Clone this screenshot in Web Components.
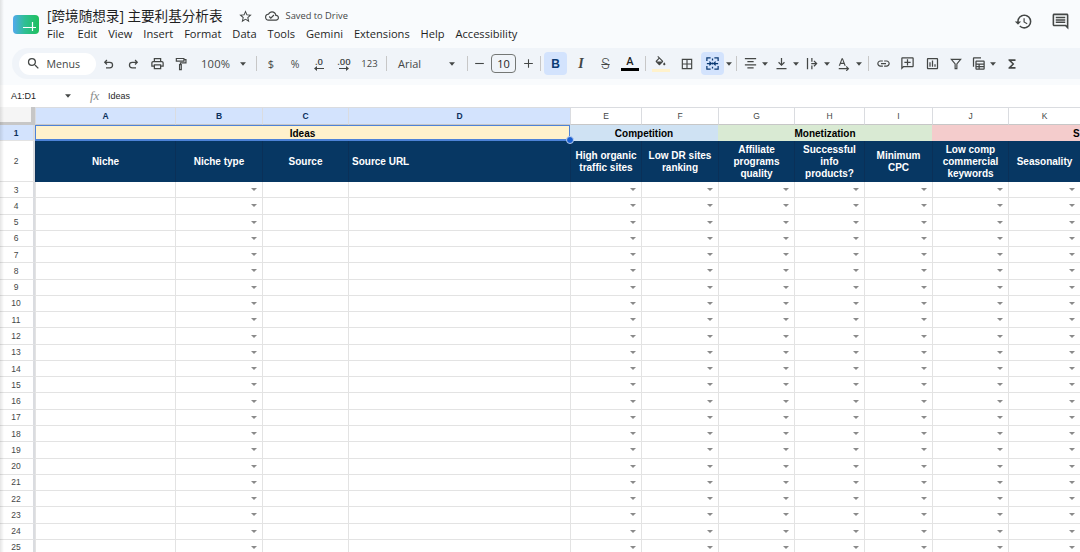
<!doctype html>
<html>
<head>
<meta charset="utf-8">
<title>Sheet</title>
<style>
  html, body { margin: 0; height: 552px; overflow: hidden; background: #f9fbfd; }
  sheet-app { font-family: Roboto, "Liberation Sans", sans-serif; }
</style>
</head>
<body>
<sheet-app></sheet-app>

<script>
  (function (document, window) {

    const ICONS = {
      search: '<path d="M15.5 14h-.79l-.28-.27A6.471 6.471 0 0 0 16 9.5 6.5 6.5 0 1 0 9.5 16c1.61 0 3.09-.59 4.23-1.57l.27.28v.79l5 4.99L20.49 19l-4.99-5zm-6 0C7.01 14 5 11.99 5 9.5S7.01 5 9.5 5 14 7.01 14 9.5 11.99 14 9.5 14z"/>',
      undo: '<path d="M6 10h8a4.5 4.5 0 0 1 0 9H8M9.5 6.5L6 10l3.5 3.5" fill="none" stroke="currentColor" stroke-width="2"/>',
      redo: '<path d="M18 10h-8a4.5 4.5 0 0 0 0 9h6M14.5 6.5L18 10l-3.5 3.5" fill="none" stroke="currentColor" stroke-width="2"/>',
      print: '<path d="M19 8h-1V3H6v5H5c-1.66 0-3 1.34-3 3v6h4v4h12v-4h4v-6c0-1.66-1.34-3-3-3zM8 5h8v3H8V5zm8 12v2H8v-4h8v2zm2-2v-2H6v2H4v-4c0-.55.45-1 1-1h14c.55 0 1 .45 1 1v4h-2z"/>',
      paint: '<path d="M4 2.5h13V7H4zM17 4.5h3.5V10H11v3M9.5 13h3v8.5h-3z" fill="none" stroke="currentColor" stroke-width="2"/>',
      minus: '<path d="M4 11h16v2H4z"/>',
      plus: '<path d="M11 4h2v7h7v2h-7v7h-2v-7H4v-2h7z"/>',
      fill: '<path d="M16.56 8.94L7.62 0 6.21 1.41l2.38 2.38-5.15 5.15c-.59.59-.59 1.54 0 2.12l5.5 5.5c.29.29.68.44 1.06.44s.77-.15 1.06-.44l5.5-5.5c.59-.58.59-1.53 0-2.12zM5.21 10L10 5.21 14.79 10H5.21zM19 11.5s-2 2.17-2 3.5c0 1.1.9 2 2 2s2-.9 2-2c0-1.33-2-3.5-2-3.5z"/>',
      borders: '<path d="M3 3v18h18V3H3zm8 16H5v-6h6v6zm0-8H5V5h6v6zm8 8h-6v-6h6v6zm0-8h-6V5h6v6z"/>',
      merge: '<path d="M3 8V3h6M21 8V3h-6M3 16v5h6M21 16v5h-6M3 12h6M21 12h-6M7 9l3 3-3 3M17 9l-3 3 3 3M12 4v3M12 10.5v3M12 17v3" fill="none" stroke="currentColor" stroke-width="2"/>',
      align: '<path d="M3 3h18v2H3zM7 8h10v2H7zM3 13h18v2H3zM7 18h10v2H7z"/>',
      valign: '<path d="M4 19h16v2H4zM13 3v9.2l3-3 1.4 1.4L12 16l-5.4-5.4L8 9.2l3 3V3z"/>',
      wrap: '<path d="M3 3h2v18H3zM10 3h2v6h-2zM10 15h2v6h-2zM10 11h6.2l-2.6-2.6L15 7l5 5-5 5-1.4-1.4 2.6-2.6H10z"/>',
      rotate: '<path d="M3 15h2.2l1-3h5.6l1 3H15L10 2H8L3 15zm4-5l2-5.6L11 10H7zM3 19h14.2l-2-2 1.4-1.4L21 20l-4.4 4.4-1.4-1.4 2-2H3z"/>',
      link: '<path d="M3.9 12c0-1.71 1.39-3.1 3.1-3.1h4V7H7c-2.76 0-5 2.24-5 5s2.24 5 5 5h4v-1.9H7c-1.71 0-3.1-1.39-3.1-3.1zM8 13h8v-2H8v2zm9-6h-4v1.9h4c1.71 0 3.1 1.39 3.1 3.1s-1.39 3.1-3.1 3.1h-4V17h4c2.76 0 5-2.24 5-5s-2.24-5-5-5z"/>',
      comment: '<path d="M20 2H4c-1.1 0-2 .9-2 2v18l4-4h14c1.1 0 2-.9 2-2V4c0-1.1-.9-2-2-2zm0 14H5.17L4 17.17V4h16v12z"/><path d="M13 5h-2v4H7v2h4v4h2v-4h4V9h-4z"/>',
      chart: '<path d="M19 3H5c-1.1 0-2 .9-2 2v14c0 1.1.9 2 2 2h14c1.1 0 2-.9 2-2V5c0-1.1-.9-2-2-2zm0 16H5V5h14v14zM7 10h2v7H7zm4-3h2v10h-2zm4 6h2v4h-2z"/>',
      filter: '<path d="M4 4h16l-6.5 8v8h-3v-8L4 4z" fill="none" stroke="currentColor" stroke-width="2"/>',
      table: '<path d="M3 17V4c0-1.1.9-2 2-2h11v2H5v13H3z"/><path d="M9 7h11c1.1 0 2 .9 2 2v11c0 1.1-.9 2-2 2H9c-1.1 0-2-.9-2-2V9c0-1.1.9-2 2-2zm0 2v3h11V9H9zm0 5v2h3v-2H9zm5 0v2h6v-2h-6zm-5 4v2h3v-2H9zm5 0v2h6v-2h-6z"/>',
      sigma: '<path d="M18 4H6v2l6.5 6L6 18v2h12v-3h-7l5-5-5-5h7z"/>',
      caret: '<path d="M5 8l7 8 7-8z"/>',
      star: '<path d="M22 9.24l-7.19-.62L12 2 9.19 8.63 2 9.24l5.46 4.73L5.82 21 12 17.27 18.18 21l-1.63-7.03L22 9.24zM12 15.4l-3.76 2.27 1-4.28-3.32-2.88 4.38-.38L12 6.1l1.71 4.04 4.38.38-3.32 2.88 1 4.28L12 15.4z"/>',
      cloud: '<path d="M19.35 10.04A7.49 7.49 0 0 0 12 4C9.11 4 6.6 5.64 5.35 8.04A5.994 5.994 0 0 0 0 14c0 3.31 2.69 6 6 6h13c2.76 0 5-2.24 5-5 0-2.64-2.05-4.78-4.65-4.96zM19 18H6c-2.21 0-4-1.79-4-4 0-2.05 1.53-3.76 3.56-3.97l1.07-.11.5-.95A5.469 5.469 0 0 1 12 6c2.62 0 4.88 1.86 5.39 4.43l.3 1.5 1.53.11A2.98 2.98 0 0 1 22 15c0 1.65-1.35 3-3 3zm-9-3.82l-2.09-2.09L6.5 13.5 10 17l6.01-6.01-1.41-1.41z"/>',
      history: '<path d="M13 3a9 9 0 0 0-9 9H1l3.89 3.89.07.14L9 12H6c0-3.87 3.13-7 7-7s7 3.13 7 7-3.13 7-7 7c-1.93 0-3.68-.79-4.94-2.06l-1.42 1.42A8.954 8.954 0 0 0 13 21a9 9 0 0 0 0-18zm-1 5v5l4.28 2.54.72-1.21-3.5-2.08V8H12z"/>',
      chat: '<path d="M22 4c0-1.1-.9-2-2-2H4c-1.1 0-2 .9-2 2v12c0 1.1.9 2 2 2h14l4 4V4zm-2 13.17L18.83 16H4V4h16v13.17zM6 12h12v2H6zm0-3h12v2H6zm0-3h12v2H6z"/>'
    };

    function icon(name, size) {
      return `<svg width="${size}" height="${size}" viewBox="0 0 24 24" fill="currentColor" aria-hidden="true">${ICONS[name]}</svg>`;
    }

    // one slot of the toolbar: w = width, ml = gap before it, icon or slotted text
    class TbBtn extends HTMLElement {
      connectedCallback() {
        if (this.shadowRoot) return;
        const shadowRoot = this.attachShadow({ mode: 'open' });
        const w = this.getAttribute('w') || 24;
        const ml = this.getAttribute('ml') || 0;
        const name = this.getAttribute('icon');
        const size = this.getAttribute('size') || 15;
        shadowRoot.innerHTML = `<style>
          :host { display: flex; flex: none; align-items: center; justify-content: center;
            width: ${w}px; margin-left: ${ml}px; height: 23px; color: #444746; font-size: 11px; }
          :host([active]) { background: #d3e3fd; border-radius: 4px; color: #0b3a73; }
          svg { flex: none; }
        </style>${name ? icon(name, size) : ''}<slot></slot>`;
      }
    }
    window.customElements.define('tb-btn', TbBtn);

    // dropdown in the toolbar: label at the left, caret at the right
    class TbSelect extends HTMLElement {
      connectedCallback() {
        if (this.shadowRoot) return;
        const shadowRoot = this.attachShadow({ mode: 'open' });
        const w = this.getAttribute('w');
        const pad = this.getAttribute('pad');
        const right = this.getAttribute('right');
        shadowRoot.innerHTML = `<style>
          :host { display: flex; flex: none; align-items: center; justify-content: space-between; box-sizing: border-box;
            width: ${w}px; height: 23px; padding: 0 ${right}px 0 ${pad}px; color: #444746; font-size: 11px; }
          svg { flex: none; }
        </style><slot></slot>${icon('caret', 10)}`;
      }
    }
    window.customElements.define('tb-select', TbSelect);

    class TbSep extends HTMLElement {
      connectedCallback() {
        if (this.shadowRoot) return;
        const shadowRoot = this.attachShadow({ mode: 'open' });
        shadowRoot.innerHTML = `<style>
          :host { display: flex; flex: none; justify-content: center; align-items: center; height: 23px;
            width: ${this.getAttribute('w') || 8}px; }
          i { display: block; width: 1px; height: 15px; background: #c7c7c7; }
        </style><i></i>`;
      }
    }
    window.customElements.define('tb-sep', TbSep);

    class TitleBar extends HTMLElement {
      connectedCallback() {
        if (this.shadowRoot) return;
        const shadowRoot = this.attachShadow({ mode: 'open' });
        const menus = ['File', 'Edit', 'View', 'Insert', 'Format', 'Data', 'Tools', 'Gemini', 'Extensions', 'Help', 'Accessibility'];
        shadowRoot.innerHTML = `<style>
          :host { display: flex; height: 48px; box-sizing: border-box; padding-left: 13px; align-items: flex-start; color: #1f1f1f; }
          .logo { flex: none; margin-top: 15px; }
          .names { margin-left: 8px; margin-top: 7px; flex: 1; }
          .top { display: flex; align-items: center; height: 18px; }
          h1 { margin: 0; font: 400 13.6px/18px "Open Sans", "Noto Sans CJK SC", sans-serif; white-space: nowrap; color: #1f1f1f; }
          .star { display: flex; margin-left: 15px; color: #444746; }
          .cloud { display: flex; margin-left: 12px; color: #444746; }
          .saved { margin-left: 7px; font: 400 9.3px/18px "Open Sans", sans-serif; color: #444746; }
          nav { display: flex; margin-top: 1px; height: 16px; align-items: center; font: 400 11.1px/16px "Open Sans", sans-serif; color: #1f1f1f; }
          nav span { margin-right: 10.9px; }
          nav span:first-child { margin-right: 13px; }
          .right { flex: none; display: flex; margin-top: 12px; color: #444746; gap: 18px; margin-right: 10px; }
        </style>
        <svg class="logo" width="26" height="19" viewBox="0 0 26 19">
          <defs><linearGradient id="g" x1="0" x2="1" y1="0" y2="0">
            <stop offset="0" stop-color="#52a9ee"/><stop offset=".45" stop-color="#2fbf94"/><stop offset="1" stop-color="#1fbf5c"/>
          </linearGradient></defs>
          <rect width="26" height="19" rx="4" fill="url(#g)"/>
          <path d="M10 12.5h13M19.5 7v9" stroke="#fff" stroke-width="1.2" fill="none"/>
        </svg>
        <div class="names">
          <div class="top">
            <h1>[跨境随想录] 主要利基分析表</h1>
            <span class="star">${icon('star', 15)}</span>
            <span class="cloud">${icon('cloud', 14)}</span>
            <span class="saved">Saved to Drive</span>
          </div>
          <nav>${menus.map((m) => `<span>${m}</span>`).join('')}</nav>
        </div>
        <div class="right">${icon('history', 19)}${icon('chat', 19)}</div>`;
      }
    }
    window.customElements.define('title-bar', TitleBar);

    class ToolBar extends HTMLElement {
      connectedCallback() {
        if (this.shadowRoot) return;
        const shadowRoot = this.attachShadow({ mode: 'open' });
        shadowRoot.innerHTML = `<style>
          :host { display: flex; align-items: center; height: 31px; margin-left: 12px; box-sizing: border-box; padding-left: 7px;
            background: #f0f4f9; border-radius: 16px 0 0 16px; color: #444746; font-family: "Open Sans", sans-serif; }
          .search { display: flex; flex: none; align-items: center; width: 77px; height: 22px; background: #fff; border-radius: 11px;
            box-sizing: border-box; padding-left: 7px; font-size: 10.6px; color: #444746; }
          .search span { margin-left: 5.5px; }
          .dec { display: flex; flex-direction: column; align-items: center; line-height: 9px; font-size: 9.5px; font-weight: 600; }
          .dec svg { display: block; margin-top: 0; }
          .box { display: block; width: 25.5px; height: 19px; box-sizing: border-box; border: 1px solid #747775; border-radius: 4px;
            font-size: 11px; line-height: 17px; text-align: center; color: #1f1f1f; }
          .b { font: 700 12px "Liberation Sans", sans-serif; }
          .i { font: italic 700 14px "Liberation Serif", serif; }
          .s { font: 300 14px Roboto, sans-serif; text-decoration: line-through; }
          .a { display: flex; flex-direction: column; align-items: center; font: 500 11px/11px Roboto, sans-serif; color: #1f1f1f; }
          .bar { display: block; width: 18px; height: 3px; margin-top: 1px; }
          .stack { display: flex; flex-direction: column; align-items: center; }
        </style>
        <div class="search">${icon('search', 15)}<span>Menus</span></div>
        <tb-btn w="25" icon="undo"></tb-btn>
        <tb-btn w="24" icon="redo"></tb-btn>
        <tb-btn w="24" icon="print"></tb-btn>
        <tb-btn w="24" icon="paint" size="14"></tb-btn>
        <tb-select w="59" pad="8" right="4"><span style="font-size:11.2px;letter-spacing:.2px">100%</span></tb-select>
        <tb-sep w="9"></tb-sep>
        <tb-btn w="20">$</tb-btn>
        <tb-btn w="28" style="font-size:10.5px">%</tb-btn>
        <tb-btn w="20"><span class="dec">.0<svg width="12" height="5" viewBox="0 0 12 5" fill="currentColor"><path d="M1 2.5L4 0v2h7v1H4v2z"/></svg></span></tb-btn>
        <tb-btn w="30"><span class="dec">.00<svg width="12" height="5" viewBox="0 0 12 5" fill="currentColor"><path d="M11 2.5L8 0v2H1v1h7v2z"/></svg></span></tb-btn>
        <tb-btn w="21" style="font-size:9.5px">123</tb-btn>
        <tb-sep w="12"></tb-sep>
        <tb-select w="71" pad="6" right="6"><span>Arial</span></tb-select>
        <tb-sep w="8"></tb-sep>
        <tb-btn w="16" icon="minus" size="13"></tb-btn>
        <tb-btn w="33"><span class="box">10</span></tb-btn>
        <tb-btn w="16" icon="plus" size="13"></tb-btn>
        <tb-sep w="8"></tb-sep>
        <tb-btn w="23" active><span class="b">B</span></tb-btn>
        <tb-btn w="28"><span class="i">I</span></tb-btn>
        <tb-btn w="21"><span class="s">S</span></tb-btn>
        <tb-btn w="28"><span class="a">A<i class="bar" style="background:#000"></i></span></tb-btn>
        <tb-sep w="2"></tb-sep>
        <tb-btn w="29"><span class="stack">${icon('fill', 13)}<i class="bar" style="background:#fff2cc;margin-top:0"></i></span></tb-btn>
        <tb-btn w="24" icon="borders" size="14"></tb-btn>
        <tb-btn w="23" ml="2" icon="merge" size="15" active></tb-btn>
        <tb-btn w="10" icon="caret" size="10"></tb-btn>
        <tb-sep w="4"></tb-sep>
        <tb-btn w="24" icon="align"></tb-btn>
        <tb-btn w="5" icon="caret" size="10"></tb-btn>
        <tb-btn w="24" ml="2" icon="valign"></tb-btn>
        <tb-btn w="5" icon="caret" size="10"></tb-btn>
        <tb-btn w="24" ml="2" icon="wrap"></tb-btn>
        <tb-btn w="5" icon="caret" size="10"></tb-btn>
        <tb-btn w="24" ml="3" icon="rotate" size="14"></tb-btn>
        <tb-btn w="5" icon="caret" size="10"></tb-btn>
        <tb-sep w="14"></tb-sep>
        <tb-btn w="16" icon="link" size="15"></tb-btn>
        <tb-btn w="32" icon="comment" size="15"></tb-btn>
        <tb-btn w="18" icon="chart" size="15"></tb-btn>
        <tb-btn w="30" icon="filter" size="14"></tb-btn>
        <tb-btn w="14" icon="table" size="15"></tb-btn>
        <tb-btn w="16" icon="caret" size="10"></tb-btn>
        <tb-btn w="22" icon="sigma" size="14"></tb-btn>`;
      }
    }
    window.customElements.define('tool-bar', ToolBar);

    class FormulaBar extends HTMLElement {
      connectedCallback() {
        if (this.shadowRoot) return;
        const shadowRoot = this.attachShadow({ mode: 'open' });
        shadowRoot.innerHTML = `<style>
          :host { display: flex; align-items: center; height: 22px; margin-top: 6px; background: #fff; color: #1f1f1f;
            font: 400 9px/22px "Liberation Sans", sans-serif; }
          .ref { width: 52px; margin-left: 11px; }
          .car { display: flex; color: #444746; }
          .fx { margin-left: 17px; width: 18px; font: italic 400 13px/22px "Liberation Serif", serif; color: #8a8d8c; }
        </style>
        <span class="ref">A1:D1</span>
        <span class="car">${icon('caret', 10)}</span>
        <span class="fx">fx</span>
        <span>Ideas</span>`;
      }
    }
    window.customElements.define('formula-bar', FormulaBar);

    class SheetGrid extends HTMLElement {
      connectedCallback() {
        if (this.shadowRoot) return;
        const shadowRoot = this.attachShadow({ mode: 'open' });
        const widths = [35, 140, 87, 86, 222, 71, 77, 76, 70, 68, 76, 72];
        const letters = 'ABCDEFGHIJK'.split('');
        const withCaret = 'BEFGHIJK';
        const heads = [
          ['Niche', ''], ['Niche type', ''], ['Source', ''], ['Source URL', 'left'],
          ['High organic<br>traffic sites', ''], ['Low DR sites<br>ranking', ''],
          ['Affiliate<br>programs<br>quality', ''], ['Successful<br>info<br>products?', ''],
          ['Minimum<br>CPC', ''], ['Low comp<br>commercial<br>keywords', ''], ['Seasonality', '']
        ];
        let html = '<div class="corner"></div>';
        letters.forEach((l, i) => {
          html += `<div class="ch${i < 4 ? ' on' : ''}">${l}</div>`;
        });
        html += '<div class="rh on">1</div>';
        html += '<div class="band" style="grid-column:span 4;background:#fff2cc">Ideas</div>';
        html += '<div class="band" style="grid-column:span 2;background:#cfe2f3">Competition</div>';
        html += '<div class="band" style="grid-column:span 3;background:#d9ead3">Monetization</div>';
        html += '<div class="band cut" style="grid-column:span 2;background:#f4cccc">S</div>';
        html += '<div class="rh">2</div>';
        heads.forEach((h) => {
          html += `<div class="hd ${h[1]}">${h[0]}</div>`;
        });
        for (let r = 3; r <= 25; r++) {
          html += `<div class="rh">${r}</div>`;
          letters.forEach((l) => {
            html += `<div class="c">${withCaret.indexOf(l) >= 0 ? '<b></b>' : ''}</div>`;
          });
        }
        html += '<div class="sel"><i></i></div>';
        shadowRoot.innerHTML = `<style>
          :host { display: grid; position: relative; grid-template-columns: ${widths.map((w) => w + 'px').join(' ')};
            grid-template-rows: 18px 16px 41px repeat(23, 16.27px); background: #fff;
            font-family: "Liberation Sans", sans-serif; color: #000; overflow: hidden; width: 1080px; }
          .corner { background: #f5f5f5; border-right: 4px solid #c7c7c7; border-bottom: 3px solid #c7c7c7; box-sizing: border-box; }
          .ch { display: flex; align-items: center; justify-content: center; box-sizing: border-box; background: #fff;
            border-left: 1px solid #dadce0; border-bottom: 1px solid #c7c7c7; border-top: 1px solid #dadce0; font-size: 8.5px; color: #444746; }
          .ch.on { background: #d3e3fd; font-weight: 700; color: #0b2f5c; }
          .rh { display: flex; align-items: center; justify-content: center; box-sizing: border-box; padding-right: 1px;
            background: #fff; border-right: 2px solid #dadce0; border-bottom: 1px solid #e3e3e3;
            font-size: 8.5px; color: #444746; }
          .rh.on { background: #d3e3fd; font-weight: 700; color: #0b2f5c; }
          .band { display: flex; align-items: center; justify-content: center; font-size: 10px; font-weight: 700; color: #000; box-sizing: border-box; }
          .band.cut { justify-content: flex-start; padding-left: 141px; white-space: nowrap; }
          .sel { position: absolute; left: 35px; top: 18px; width: 535px; height: 16px; box-sizing: border-box; border: 1.5px solid #4d83d8;
            border-bottom-width: 2px; pointer-events: none; }
          .sel i { position: absolute; right: -5px; bottom: -5px; width: 6px; height: 6px; border-radius: 50%; background: #1a5fd0; border: 1px solid #bcd0ee; }
          .hd { display: flex; align-items: center; justify-content: center; text-align: center; box-sizing: border-box; background: #073763;
            border-left: 1px solid #0a3058; padding-top: 1px; color: #fff; font-size: 10px; font-weight: 700; line-height: 12px; }
          .hd.left { justify-content: flex-start; padding-left: 3px; }
          .c { display: flex; align-items: center; justify-content: flex-end; box-sizing: border-box; padding-right: 5px;
            background: #fff; border-left: 1px solid #e3e3e3; border-bottom: 1px solid #e3e3e3; }
          .c b { display: block; width: 0; height: 0; border-left: 3px solid transparent; border-right: 3px solid transparent; border-top: 3px solid #8a8a8a; }
        </style>${html}`;
      }
    }
    window.customElements.define('sheet-grid', SheetGrid);

    class SheetApp extends HTMLElement {
      connectedCallback() {
        if (this.shadowRoot) return;
        const shadowRoot = this.attachShadow({ mode: 'open' });
        shadowRoot.innerHTML = `<style>
          :host { display: block; position: relative; width: 1080px; height: 552px; overflow: hidden; }
          /* soft shade along the left window edge */
          :host::after { content: ""; position: absolute; left: 0; top: 0; width: 4px; height: 100%;
            background: linear-gradient(90deg, rgba(0,0,0,.1), rgba(0,0,0,0)); pointer-events: none; }
        </style>
        <title-bar></title-bar>
        <tool-bar></tool-bar>
        <formula-bar></formula-bar>
        <sheet-grid></sheet-grid>`;
      }
    }
    window.customElements.define('sheet-app', SheetApp);

  })(document, window);
</script>
</body>
</html>
